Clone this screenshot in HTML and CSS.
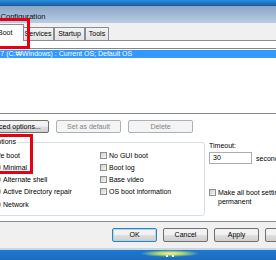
FILE: index.html
```html
<!DOCTYPE html>
<html>
<head>
<meta charset="utf-8">
<link rel="stylesheet" href="styles.css">
</head>
<body>
<div class="screen">
  <div class="topstrip"></div>
  <div class="window">
    <div class="titlebar"><span class="title">System Configuration</span></div>
    <div class="tabs">
      <div class="tab t-general">General</div>
      <div class="tab active">Boot</div>
      <div class="tab t-services">Services</div>
      <div class="tab t-startup">Startup</div>
      <div class="tab t-tools">Tools</div>
    </div>
    <div class="page">
      <div class="listbox">
        <div class="item selected">Windows 7 (C:₩Windows) : Current OS; Default OS</div>
      </div>
      <div class="btnrow">
        <div class="btn wide">Advanced options...</div>
        <div class="btn disabled">Set as default</div>
        <div class="btn disabled">Delete</div>
      </div>
      <div class="lower">
        <div class="group">
          <div class="legend">Boot options</div>
          <div class="cols">
            <div class="col col1">
              <div class="row"><span class="check"></span><span>Safe boot</span></div>
              <div class="row indent"><span class="radio"></span><span>Minimal</span></div>
              <div class="row indent"><span class="radio"></span><span>Alternate shell</span></div>
              <div class="row indent"><span class="radio"></span><span>Active Directory repair</span></div>
              <div class="row indent"><span class="radio"></span><span>Network</span></div>
            </div>
            <div class="col col2">
              <div class="row"><span class="check"></span><span>No GUI boot</span></div>
              <div class="row"><span class="check"></span><span>Boot log</span></div>
              <div class="row"><span class="check"></span><span>Base video</span></div>
              <div class="row"><span class="check"></span><span>OS boot information</span></div>
            </div>
          </div>
        </div>
        <div class="side">
          <div class="label">Timeout:</div>
          <div class="timeout">
            <div class="input">30</div>
            <span>seconds</span>
          </div>
          <div class="perm">
            <span class="check"></span>
            <span class="permtext">Make all boot settings<br>permanent</span>
          </div>
        </div>
      </div>
    </div>
    <div class="footer">
      <div class="btn foot default">OK</div>
      <div class="btn foot">Cancel</div>
      <div class="btn foot">Apply</div>
      <div class="btn foot">Help</div>
    </div>
  </div>
  <div class="desktop"><div class="glow"><span class="dot"></span><span class="dot"></span></div></div>
  <div class="mark mark1"></div>
  <div class="mark mark2"></div>
</div>
</body>
</html>
```
FILE: styles.css
```css
* { box-sizing: border-box; }
html, body { margin: 0; padding: 0; }
body {
  width: 276px;
  height: 260px;
  overflow: hidden;
  font-family: "Liberation Sans", Arial, sans-serif;
  font-size: 7px;
  color: #000;
  background: #1f6fc0;
}
.screen { position: relative; width: 276px; height: 260px; overflow: hidden; }
.topstrip {
  height: 6px;
  background: linear-gradient(#2a8ddc, #1466b8);
  border-bottom: 1px solid #2c5783;
}
.window {
  margin-left: -45px;
  width: 400px;
  background: #f0f0f0;
  border-bottom: 2px solid #c9d6e4;
}
.titlebar {
  height: 17px;
  background: linear-gradient(#8aa5c6, #b9cde4);
  padding: 6px 0 0 18px;
  font-size: 7.6px;
  line-height: 9px;
  color: #111;
}
.tabs {
  height: 18px;
  display: flex;
  align-items: flex-end;
  padding-left: 10px;
  border-bottom: 1px solid #898c95;
}
.tab {
  height: 13px;
  line-height: 12px;
  text-align: center;
  border: 1px solid #898c95;
  border-bottom: none;
  background: linear-gradient(#f3f3f3, #e3e3e3);
}
.t-general { width: 30px; }
.t-services { width: 32px; }
.t-startup { width: 31px; }
.t-tools { width: 24px; }
.tab.active {
  height: 17px;
  line-height: 15px;
  background: #fff;
  position: relative;
  z-index: 1;
  text-align: left;
  width: 32px;
  padding: 0 0 0 5px;
  margin: 0 -2px -1px -3px;
}
.page {
  background: #fff;
  height: 181px;
  padding: 7px 0 0 10px;
  border-bottom: 1px solid #898c95;
}
.listbox {
  height: 66px;
  border: 1px solid #828790;
  padding: 1px;
  background: #fff;
}
.item {
  height: 8px;
  line-height: 8px;
  padding-left: 3px;
}
.item.selected { background: #3399ff; color: #fff; }
.btnrow {
  display: flex;
  gap: 7px;
  margin-top: 6px;
  padding-left: 6px;
}
.btn {
  height: 13px;
  width: 65px;
  line-height: 11px;
  text-align: center;
  border: 1px solid #707070;
  border-radius: 2px;
  background: linear-gradient(#f2f2f2 45%, #dddddd 55%, #cfcfcf);
}
.btn.wide { width: 78px; }
.btn.disabled {
  border-color: #adb2b5;
  background: #f4f4f4;
  color: #838383;
}
.lower {
  display: flex;
  margin-top: 9px;
}
.group {
  width: 238px;
  height: 74px;
  margin-left: 2px;
  border: 1px solid #d5dfe5;
  border-radius: 3px;
  position: relative;
  padding: 8px 0 0 13px;
}
.legend {
  position: absolute;
  top: -5px;
  left: 7px;
  background: #fff;
  padding: 0 2px;
  line-height: 8px;
}
.cols { display: flex; }
.col { display: flex; flex-direction: column; gap: 4.3px; }
.col1 { width: 119px; }
.row { display: flex; align-items: center; height: 8px; gap: 2px; }
.row.indent { padding-left: 13px; }
.check {
  display: inline-block;
  width: 7px;
  height: 7px;
  border: 1px solid #8e8f8f;
  background: linear-gradient(135deg, #cfd0d2, #f6f6f6);
}
.radio {
  display: inline-block;
  width: 7px;
  height: 7px;
  border: 1px solid #8e8f8f;
  border-radius: 50%;
  background: linear-gradient(135deg, #cfd0d2, #f6f6f6);
}
.side {
  padding-left: 4px;
}
.label { line-height: 8px; }
.timeout { display: flex; align-items: center; gap: 4px; margin-top: 2px; }
.input {
  width: 43px;
  height: 12px;
  border: 1px solid #abadb3;
  line-height: 10px;
  padding-left: 3px;
}
.perm { display: flex; gap: 2px; margin-top: 24px; }
.perm .check { margin-top: 1px; }
.permtext { line-height: 9px; }
.footer {
  display: flex;
  gap: 6px;
  padding: 6px 0 6px 157px;
}
.btn.foot { width: 45px; height: 14px; line-height: 12px; }
.btn.default { border-color: #3c7fb1; box-shadow: inset 0 0 0 1px #a8d8f0; }
.desktop {
  height: 20px;
  background: linear-gradient(#1c78cf, #1a5fb0);
}
.glow {
  margin-left: 140px;
  width: 60px;
  height: 7px;
  display: flex;
  justify-content: center;
  align-items: flex-end;
  gap: 4px;
  background: radial-gradient(ellipse at center, #f7f0a0 0%, #b7d86a 30%, rgba(28,120,207,0) 70%);
}
.dot { width: 2px; height: 2px; background: #fff; }
.mark {
  position: absolute;
  border: 3px solid #e60012;
}
.mark1 { left: -10px; top: 18px; width: 40px; height: 31px; }
.mark2 { left: -10px; top: 134px; width: 43px; height: 40px; }
```
